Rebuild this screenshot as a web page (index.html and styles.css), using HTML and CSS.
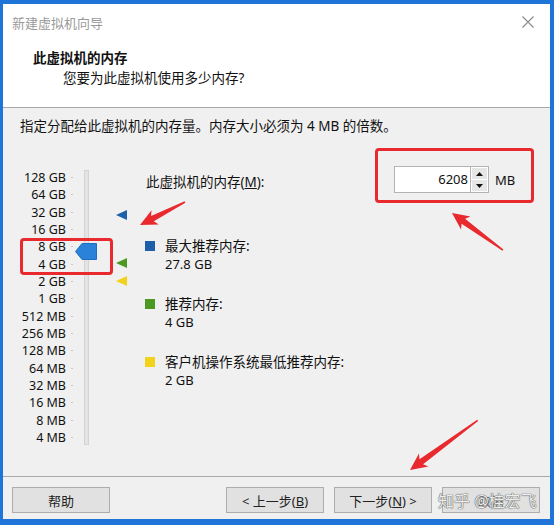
FILE: index.html
```html
<!DOCTYPE html>
<html>
  <head>
    <meta charset="utf-8">
    <title>新建虚拟机向导</title>
    <link rel="stylesheet" href="styles.css">
  </head>
  <body>
    <div class="window">
      <div class="top">
        <div class="titlebar">
          <span class="title">新建虚拟机向导</span>
          <svg class="close" width="12" height="12" viewBox="0 0 12 12"><path d="M0.5 0.5 L11.5 11.5 M11.5 0.5 L0.5 11.5" stroke="#8a8a8a" stroke-width="1.1" fill="none"/></svg>
        </div>
        <div class="heading">此虚拟机的内存</div>
        <div class="subheading">您要为此虚拟机使用多少内存?</div>
      </div>

      <div class="body">
        <p class="intro">指定分配给此虚拟机的内存量。内存大小必须为 4 MB 的倍数。</p>
        <div class="main">
          <div class="slider">
            <ul class="scale">
              <li><span>128 GB</span><i></i></li>
              <li><span>64 GB</span><i></i></li>
              <li><span>32 GB</span><i></i></li>
              <li><span>16 GB</span><i></i></li>
              <li><span>8 GB</span><i></i></li>
              <li><span>4 GB</span><i></i></li>
              <li><span>2 GB</span><i></i></li>
              <li><span>1 GB</span><i></i></li>
              <li><span>512 MB</span><i></i></li>
              <li><span>256 MB</span><i></i></li>
              <li><span>128 MB</span><i></i></li>
              <li><span>64 MB</span><i></i></li>
              <li><span>32 MB</span><i></i></li>
              <li><span>16 MB</span><i></i></li>
              <li><span>8 MB</span><i></i></li>
              <li><span>4 MB</span><i></i></li>
            </ul>
            <div class="track-col">
              <div class="track"></div>
              <svg class="thumb" width="22" height="17" viewBox="0 0 22 17"><polygon points="0.5,8.5 7,0.5 21.5,0.5 21.5,16.5 7,16.5" fill="#2a82d9" stroke="#1f6fc0" stroke-width="1"/></svg>
            </div>
            <div class="markers">
              <svg class="mark mark-max" width="11" height="10" viewBox="0 0 11 10"><polygon points="0,5 11,0 11,10" fill="#1d5fa8"/></svg>
              <svg class="mark mark-rec" width="11" height="10" viewBox="0 0 11 10"><polygon points="0,5 11,0 11,10" fill="#4a9a22"/></svg>
              <svg class="mark mark-min" width="11" height="10" viewBox="0 0 11 10"><polygon points="0,5 11,0 11,10" fill="#f2d21b"/></svg>
            </div>
          </div>

          <div class="panel">
            <div class="mem-row">
              <span class="mem-label">此虚拟机的内存(<u>M</u>):</span>
              <div class="spin">
                <div class="spin-value">6208</div>
                <div class="spin-btns">
                  <span class="spin-btn"><svg width="7" height="4" viewBox="0 0 7 4"><polygon points="3.5,0 7,4 0,4" fill="#111"/></svg></span>
                  <span class="spin-btn"><svg width="7" height="4" viewBox="0 0 7 4"><polygon points="0,0 7,0 3.5,4" fill="#111"/></svg></span>
                </div>
              </div>
              <span class="unit">MB</span>
            </div>

            <div class="legend">
              <div class="item">
                <div class="item-label"><b class="sq sq-max"></b>最大推荐内存:</div>
                <div class="item-value">27.8 GB</div>
              </div>
              <div class="item">
                <div class="item-label"><b class="sq sq-rec"></b>推荐内存:</div>
                <div class="item-value">4 GB</div>
              </div>
              <div class="item">
                <div class="item-label"><b class="sq sq-min"></b>客户机操作系统最低推荐内存:</div>
                <div class="item-value">2 GB</div>
              </div>
            </div>
          </div>
        </div>
      </div>

      <div class="footer">
        <button class="button">帮助</button>
        <div class="nav">
          <button class="button">&lt; 上一步(<u>B</u>)</button>
          <button class="button">下一步(<u>N</u>) &gt;</button>
          <button class="button cancel">取消</button>
        </div>
      </div>
    </div>

    <!-- annotations drawn over the screenshot -->
    <div class="note-box box-mem"></div>
    <div class="note-box box-scale"></div>
    <svg class="arrows" width="554" height="525" viewBox="0 0 554 525">
      <g fill="#e8292e">
        <polygon transform="translate(140 225) rotate(-27.1)" points="0,0 17,-8 14,-3 50.5,-0.8 50.5,0.8 14,3 17,8"/>
        <polygon transform="translate(452 213) rotate(36)" points="0,0 17,-8 14,-3 63,-0.8 63,0.8 14,3 17,8"/>
        <polygon transform="translate(410 470) rotate(-36.3)" points="0,0 17,-8 14,-3 84,-0.8 84,0.8 14,3 17,8"/>
      </g>
    </svg>
    <div class="watermark">知乎 @桂宏飞</div>
  </body>
</html>
```

FILE: styles.css
```css
html, body {
margin: 0;
}

body {
position: relative;
width: 554px;
height: 525px;
box-sizing: border-box;
padding: 4px 4px 6px 3px;
background: #1f74d8;
font-family: "Noto Sans", "Noto Sans CJK SC", sans-serif;
font-size: 13px;
color: #111;
overflow: hidden;
}

.window {
height: 100%;
display: flex;
flex-direction: column;
background: #f0f0f0;
}

/* header */

.top {
height: 103px;
background: #fff;
border-bottom: 1px solid #a9a9a9;
}

.titlebar {
height: 36px;
display: flex;
align-items: center;
justify-content: space-between;
padding: 0 16px 0 9px;
}

.title {
color: #9a9a9a;
font-size: 13px;
}

.heading {
margin-top: 8px;
padding-left: 30px;
line-height: 20px;
font-size: 13.5px;
font-weight: bold;
}

.subheading {
padding-left: 60px;
line-height: 20px;
font-size: 13.5px;
}

/* body */

.body {
flex: 1;
padding-left: 17px;
}

.intro {
margin: 0;
padding-top: 9px;
line-height: 18px;
font-size: 13.5px;
}

.main {
display: flex;
margin-top: 31px;
}

.slider {
display: flex;
padding-top: 3px;
}

.scale {
list-style: none;
margin: 0;
padding: 0;
width: 56px;
}

.scale li {
height: 17.33px;
line-height: 17.33px;
display: flex;
justify-content: flex-end;
align-items: center;
font-size: 12.5px;
}

.scale i {
width: 2px;
height: 1px;
background: #c9c9c9;
margin: 0 3px 0 5px;
}

.track-col {
position: relative;
width: 21px;
padding-top: 1px;
}

.track {
margin-left: 8px;
width: 3px;
height: 273px;
background: #e4e4e4;
border: 1px solid #d4d4d4;
}

.thumb {
position: absolute;
left: -1px;
top: 74px;
}

.markers {
position: relative;
width: 48px;
}

.mark {
position: absolute;
left: 19px;
}

.mark-max { top: 41px; }
.mark-rec { top: 89px; }
.mark-min { top: 107px; }

/* right panel */

.panel {
flex: 1;
}

.mem-row {
display: flex;
align-items: center;
height: 27px;
}

.mem-label {
width: 249px;
padding: 2px 0 0 1px;
box-sizing: border-box;
font-size: 13.5px;
}

.spin {
display: flex;
height: 27px;
}

.spin-value {
width: 73px;
height: 25px;
line-height: 25px;
border: 1px solid #b4b4b4;
border-right: none;
background: #fff;
text-align: right;
padding-right: 2px;
box-sizing: content-box;
font-size: 13px;
}

.spin-btns {
display: flex;
flex-direction: column;
width: 19px;
height: 27px;
border: 1px solid #b4b4b4;
box-sizing: border-box;
background: #fff;
}

.spin-btn {
flex: 1;
display: flex;
align-items: center;
justify-content: center;
background: #e6e6e6;
margin: 1px;
}

.spin-btn + .spin-btn {
margin-top: 0;
}

.unit {
margin-left: 6px;
font-size: 13px;
}

.legend {
margin-top: 44px;
display: flex;
flex-direction: column;
gap: 22px;
}

.item-label, .item-value {
line-height: 18px;
}

.item-label {
display: flex;
align-items: center;
font-size: 13.5px;
}

.item-value {
padding-left: 20px;
font-size: 13px;
}

.sq {
width: 10px;
height: 10px;
margin-right: 10px;
}

.sq-max { background: #1d5fa8; }
.sq-rec { background: #4a9a22; }
.sq-min { background: #f2d21b; }

/* footer */

.footer {
display: flex;
justify-content: space-between;
border-top: 1px solid #a9a9a9;
padding: 10px 10px 6px 9px;
}

.nav {
display: flex;
gap: 10px;
}

.button {
width: 98px;
height: 26px;
padding: 0;
background: #e1e1e1;
border: 1px solid #adadad;
font-family: "Noto Sans", "Noto Sans CJK SC", sans-serif;
font-size: 13px;
color: #222;
}

.cancel {
color: #777;
}

/* annotations */

.note-box {
position: absolute;
border: 3px solid #e8292e;
border-radius: 4px;
box-sizing: border-box;
}

.box-mem {
left: 375px;
top: 148px;
width: 159px;
height: 55px;
}

.box-scale {
left: 20px;
top: 238px;
width: 93px;
height: 37px;
}

.arrows {
position: absolute;
left: 0;
top: 0;
pointer-events: none;
}

.watermark {
position: absolute;
left: 438px;
top: 490px;
font-size: 16px;
line-height: 22px;
color: rgba(255, 255, 255, 0.92);
text-shadow: 0 0 1px #444, 0 0 1px #444;
}
```
